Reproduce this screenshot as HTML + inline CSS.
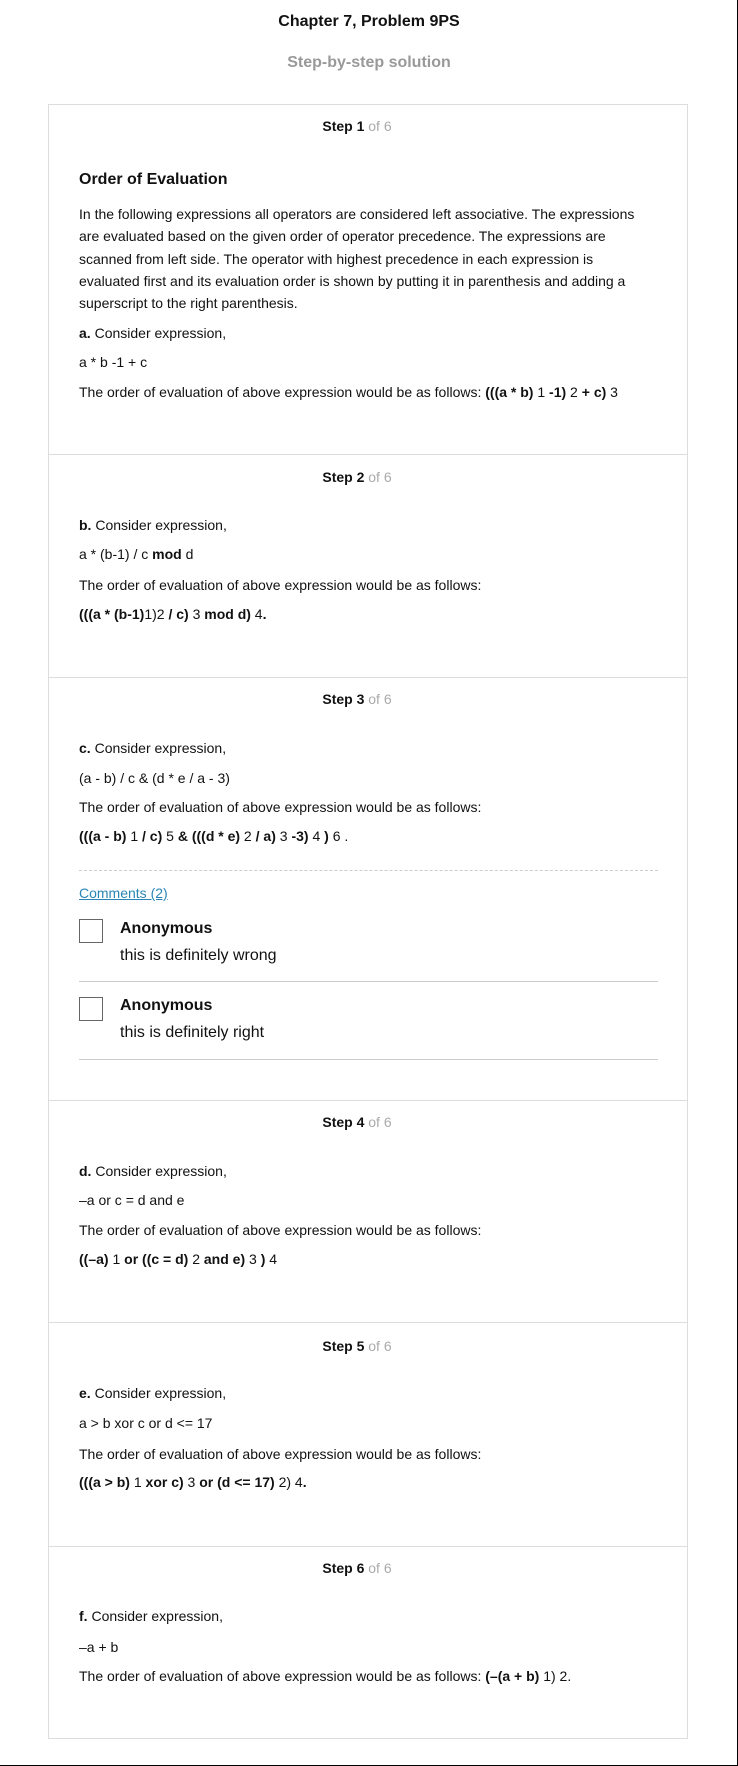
<!DOCTYPE html>
<html><head><meta charset="utf-8"><style>
body{margin:0;width:738px;height:1766px;position:relative;background:#fff;font-family:"Liberation Sans",Arial,sans-serif;color:#111;overflow:hidden}
.a{position:absolute;white-space:nowrap;font-size:14px;line-height:16px}
.c{left:0;width:738px;text-align:center}
.s{left:37px;width:640px;text-align:center;font-weight:bold}
.s span{color:#aaa;font-weight:normal}
.t{left:79px}
.hr{position:absolute;left:48px;width:640px;height:1px;background:#ddd}
</style></head><body>
<div style="position:absolute;right:0;top:0;width:1px;height:1766px;background:#000"></div>
<div style="position:absolute;left:0;bottom:0;width:738px;height:1px;background:#000"></div>
<div style="position:absolute;left:48px;top:104px;width:638px;height:1633px;border:1px solid #ddd"></div>

<div class="a c" style="top:12px;font-size:16px;line-height:20px;font-weight:bold">Chapter 7, Problem 9PS</div>
<div class="a c" style="top:53px;font-size:16px;line-height:20px;font-weight:bold;color:#999">Step-by-step solution</div>

<div class="a s" style="top:118px">Step 1 <span>of 6</span></div>
<div class="a t" style="top:170px;font-size:16px;line-height:20px;font-weight:bold">Order of Evaluation</div>
<div class="a t" style="top:203px;line-height:22.3px">In the following expressions all operators are considered left associative. The expressions<br>are evaluated based on the given order of operator precedence. The expressions are<br>scanned from left side. The operator with highest precedence in each expression is<br>evaluated first and its evaluation order is shown by putting it in parenthesis and adding a<br>superscript to the right parenthesis.</div>
<div class="a t" style="top:325px"><b>a.</b> Consider expression,</div>
<div class="a t" style="top:354px">a * b -1 + c</div>
<div class="a t" style="top:384px">The order of evaluation of above expression would be as follows: <b>(((a * b)</b> 1 <b>-1)</b> 2 <b>+ c)</b> 3</div>

<div class="hr" style="top:454px"></div>
<div class="a s" style="top:469px">Step 2 <span>of 6</span></div>
<div class="a t" style="top:517px"><b>b.</b> Consider expression,</div>
<div class="a t" style="top:546px">a * (b-1) / c <b>mod</b> d</div>
<div class="a t" style="top:577px">The order of evaluation of above expression would be as follows:</div>
<div class="a t" style="top:606px"><b>(((a * (b-1)</b>1)2 <b>/ c)</b> 3 <b>mod d)</b> 4<b>.</b></div>

<div class="hr" style="top:677px"></div>
<div class="a s" style="top:691px">Step 3 <span>of 6</span></div>
<div class="a t" style="top:740px"><b>c.</b> Consider expression,</div>
<div class="a t" style="top:770px">(a - b) / c &amp; (d * e / a - 3)</div>
<div class="a t" style="top:799px">The order of evaluation of above expression would be as follows:</div>
<div class="a t" style="top:828px"><b>(((a - b)</b> 1 <b>/ c)</b> 5 <b>&amp; (((d * e)</b> 2 <b>/ a)</b> 3 <b>-3)</b> 4 <b>)</b> 6 .</div>
<div style="position:absolute;left:79px;top:870px;width:579px;border-top:1px dashed #ccc"></div>
<div class="a t" style="top:885px;color:#2a86b5;text-decoration:underline">Comments (2)</div>
<div style="position:absolute;left:79px;top:919px;width:22px;height:22px;border:1px solid #666"></div>
<div class="a" style="left:120px;top:919px;font-size:16px;line-height:20px;font-weight:bold">Anonymous</div>
<div class="a" style="left:120px;top:946px;font-size:16px;line-height:20px">this is definitely wrong</div>
<div style="position:absolute;left:79px;top:981px;width:579px;height:1px;background:#ccc"></div>
<div style="position:absolute;left:79px;top:997px;width:22px;height:22px;border:1px solid #666"></div>
<div class="a" style="left:120px;top:996px;font-size:16px;line-height:20px;font-weight:bold">Anonymous</div>
<div class="a" style="left:120px;top:1023px;font-size:16px;line-height:20px">this is definitely right</div>
<div style="position:absolute;left:79px;top:1059px;width:579px;height:1px;background:#ccc"></div>

<div class="hr" style="top:1100px"></div>
<div class="a s" style="top:1114px">Step 4 <span>of 6</span></div>
<div class="a t" style="top:1163px"><b>d.</b> Consider expression,</div>
<div class="a t" style="top:1192px">–a or c = d and e</div>
<div class="a t" style="top:1222px">The order of evaluation of above expression would be as follows:</div>
<div class="a t" style="top:1251px"><b>((–a)</b> 1 <b>or ((c = d)</b> 2 <b>and e)</b> 3 <b>)</b> 4</div>

<div class="hr" style="top:1322px"></div>
<div class="a s" style="top:1338px">Step 5 <span>of 6</span></div>
<div class="a t" style="top:1385px"><b>e.</b> Consider expression,</div>
<div class="a t" style="top:1415px">a &gt; b xor c or d &lt;= 17</div>
<div class="a t" style="top:1446px">The order of evaluation of above expression would be as follows:</div>
<div class="a t" style="top:1474px"><b>(((a &gt; b)</b> 1 <b>xor c)</b> 3 <b>or (d &lt;= 17)</b> 2) 4<b>.</b></div>

<div class="hr" style="top:1546px"></div>
<div class="a s" style="top:1560px">Step 6 <span>of 6</span></div>
<div class="a t" style="top:1608px"><b>f.</b> Consider expression,</div>
<div class="a t" style="top:1639px">–a + b</div>
<div class="a t" style="top:1668px">The order of evaluation of above expression would be as follows: <b>(–(a + b)</b> 1) 2.</div>
</body></html>
